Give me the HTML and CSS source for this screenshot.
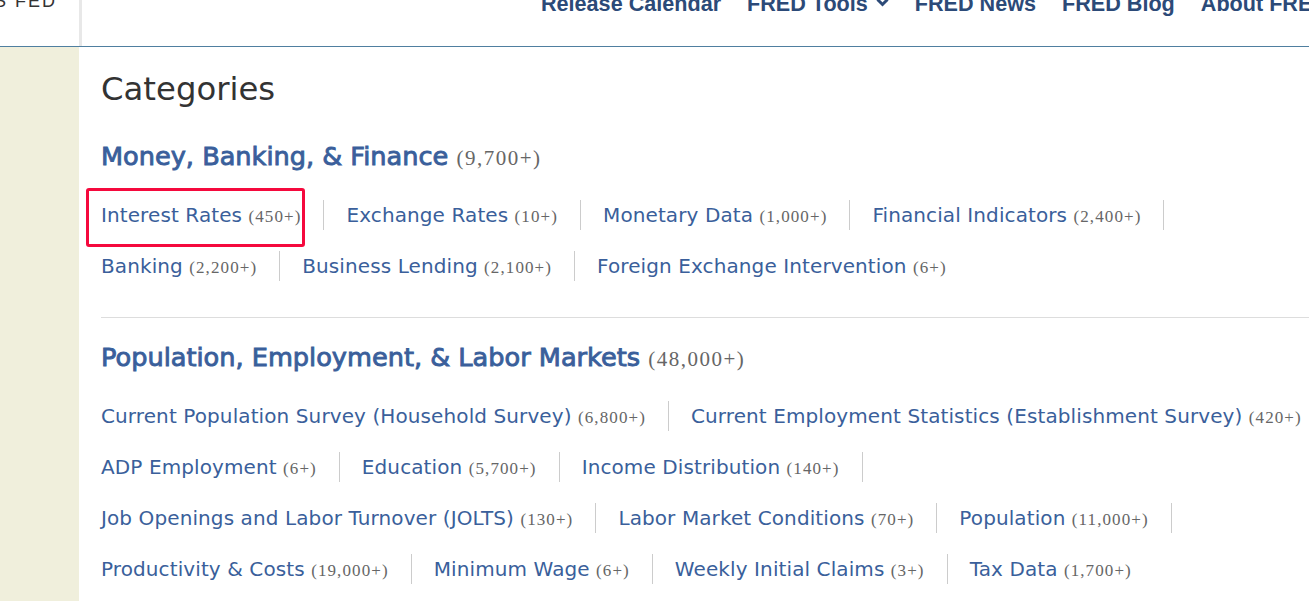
FILE: index.html
```html
<!DOCTYPE html>
<html lang="en">

<head>
    <meta charset="UTF-8" />
    <meta name="viewport" content="width=device-width, initial-scale=1.0" />
    <title>FRED | Categories</title>
    <link rel="stylesheet" href="styles.css">
</head>

<body>
    <header class="topbar">
        <div class="brand"><span class="brand-name">ST. LOUIS FED</span></div>
        <nav class="topnav">
            <a href="#">Release Calendar</a>
            <a href="#">FRED Tools
                <svg class="caret" width="13" height="9" viewBox="0 0 13 9">
                    <path d="M1.5 1.5l5 5 5-5" fill="none" stroke="currentColor" stroke-width="3" />
                </svg>
            </a>
            <a href="#">FRED News</a>
            <a href="#">FRED Blog</a>
            <a href="#">About FRED</a>
        </nav>
    </header>

    <div class="page">
        <aside class="sidebar"></aside>

        <main class="content">
            <h1>Categories</h1>

            <section class="group">
                <h2><a href="#">Money, Banking, &amp; Finance</a> <span class="count">(9,700+)</span></h2>
                <ul class="subcats">
                    <li class="marked"><a href="#">Interest Rates</a> <span class="count">(450+)</span></li>
                    <li><a href="#">Exchange Rates</a> <span class="count">(10+)</span></li>
                    <li><a href="#">Monetary Data</a> <span class="count">(1,000+)</span></li>
                    <li><a href="#">Financial Indicators</a> <span class="count">(2,400+)</span></li>
                    <li><a href="#">Banking</a> <span class="count">(2,200+)</span></li>
                    <li><a href="#">Business Lending</a> <span class="count">(2,100+)</span></li>
                    <li><a href="#">Foreign Exchange Intervention</a> <span class="count">(6+)</span></li>
                </ul>
            </section>

            <section class="group">
                <h2><a href="#">Population, Employment, &amp; Labor Markets</a> <span class="count">(48,000+)</span></h2>
                <ul class="subcats">
                    <li><a href="#">Current Population Survey (Household Survey)</a> <span class="count">(6,800+)</span></li>
                    <li><a href="#">Current Employment Statistics (Establishment Survey)</a> <span class="count">(420+)</span></li>
                    <li><a href="#">ADP Employment</a> <span class="count">(6+)</span></li>
                    <li><a href="#">Education</a> <span class="count">(5,700+)</span></li>
                    <li><a href="#">Income Distribution</a> <span class="count">(140+)</span></li>
                    <li><a href="#">Job Openings and Labor Turnover (JOLTS)</a> <span class="count">(130+)</span></li>
                    <li><a href="#">Labor Market Conditions</a> <span class="count">(70+)</span></li>
                    <li><a href="#">Population</a> <span class="count">(11,000+)</span></li>
                    <li><a href="#">Productivity &amp; Costs</a> <span class="count">(19,000+)</span></li>
                    <li><a href="#">Minimum Wage</a> <span class="count">(6+)</span></li>
                    <li><a href="#">Weekly Initial Claims</a> <span class="count">(3+)</span></li>
                    <li><a href="#">Tax Data</a> <span class="count">(1,700+)</span></li>
                </ul>
            </section>
        </main>
    </div>
</body>

</html>
```

FILE: styles.css
```css
html,
body {
    margin: 0;
    padding: 0;
    overflow: hidden;
}

body {
    background-color: #ffffff;
    font-family: 'DejaVu Sans', sans-serif;
    color: #333;
}

a {
    text-decoration: none;
}

/* top bar */

.topbar {
    display: flex;
    height: 46px;
    border-bottom: 1px solid #4f7fa0;
}

.brand {
    width: 82px;
    flex-shrink: 0;
    display: flex;
    justify-content: flex-end;
    overflow: hidden;
    border-right: 3px solid #e8e8e8;
    padding-right: 22px;
    box-sizing: border-box;
}

.brand-name {
    white-space: nowrap;
    font-family: 'Liberation Sans', Arial, sans-serif;
    font-size: 18px;
    letter-spacing: 2px;
    line-height: 20px;
    margin-top: -9px;
    color: #333;
}

.topnav {
    display: flex;
    align-items: flex-start;
    gap: 26px;
    margin-left: 459px;
    margin-top: -7px;
    white-space: nowrap;
}

.topnav a {
    font-family: 'Liberation Sans', Arial, sans-serif;
    font-size: 21.6px;
    font-weight: bold;
    line-height: 22px;
    color: #2c4a78;
    display: flex;
    align-items: center;
    gap: 8px;
}

.caret {
    margin-top: -4px;
}

/* page body */

.page {
    display: flex;
    min-height: calc(100vh - 47px);
}

.sidebar {
    width: 79px;
    flex-shrink: 0;
    background-color: #f0efdc;
}

.content {
    width: 1240px;
    flex-shrink: 0;
    padding-left: 22px;
}

h1 {
    margin: 22px 0 0;
    font-size: 32.3px;
    font-weight: normal;
    line-height: 40px;
    color: #333;
}

.group {
    margin-top: 32px;
}

.group + .group {
    margin-top: 36px;
    padding-top: 24px;
    border-top: 1px solid #dddddd;
}

h2 {
    margin: 0 0 29px;
    font-size: 25.6px;
    font-weight: normal;
    line-height: 30px;
}

h2 a {
    color: #3a5f9b;
    -webkit-text-stroke: 0.9px #3a5f9b;
}

.count {
    font-family: 'Liberation Serif', 'Times New Roman', serif;
    color: #666;
    line-height: 1;
}

h2 .count {
    font-size: 21px;
    letter-spacing: 1.5px;
}

.subcats {
    list-style: none;
    margin: 0 0 0 -22px;
    padding: 0;
    display: flex;
    flex-wrap: wrap;
    row-gap: 21px;
}

.subcats li {
    position: relative;
    height: 30px;
    padding: 0 22px;
    border-right: 1px solid #cccccc;
    font-size: 20px;
    line-height: 30px;
    white-space: nowrap;
}

.subcats li:last-child {
    border-right: none;
}

.subcats li a {
    color: #3a5f9b;
    letter-spacing: 0.1px;
}

.subcats .count {
    font-size: 17px;
    letter-spacing: 1.1px;
}

/* red highlight drawn over the first link */
.subcats li.marked::after {
    content: '';
    position: absolute;
    left: 7px;
    top: -12px;
    width: 213px;
    height: 53px;
    border: 3px solid #f5093d;
    border-radius: 3px;
}
```
